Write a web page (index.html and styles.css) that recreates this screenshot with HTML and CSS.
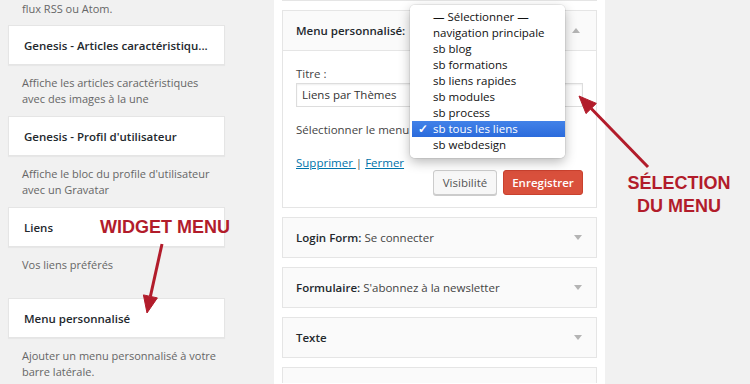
FILE: index.html
```html
<!DOCTYPE html>
<html lang="fr">
<head>
    <meta charset="UTF-8">
    <title>Widgets</title>
    <link rel="stylesheet" href="styles.css">
</head>
<body>
    <div class="available">
        <p class="desc desc-top">flux RSS ou Atom.</p>
        <div class="card">Genesis - Articles caractéristiqu...</div>
        <p class="desc">Affiche les articles caractéristiques<br>avec des images à la une</p>
        <div class="card">Genesis - Profil d'utilisateur</div>
        <p class="desc">Affiche le bloc du profile d'utilisateur<br>avec un Gravatar</p>
        <div class="card">Liens</div>
        <p class="desc">Vos liens préférés</p>
        <div class="card">Menu personnalisé</div>
        <p class="desc desc-last">Ajouter un menu personnalisé à votre<br>barre latérale.</p>
    </div>

    <div class="sidebar">
        <div class="widget-stub"></div>

        <div class="widget open">
            <div class="widget-top">
                <span class="wtitle">Menu personnalisé:</span>
                <span class="caret up"></span>
            </div>
            <div class="widget-inside">
                <p class="field-label">Titre :</p>
                <div class="text-input">Liens par Thèmes</div>
                <p class="field-label select-label">Sélectionner le menu</p>
                <div class="actions">
                    <div class="links"><a href="#">Supprimer </a>| <a href="#">Fermer</a></div>
                    <div class="buttons">
                        <button class="btn">Visibilité</button>
                        <button class="btn btn-save">Enregistrer</button>
                    </div>
                </div>
            </div>

            <ul class="dropdown">
                <li>— Sélectionner —</li>
                <li>navigation principale</li>
                <li>sb blog</li>
                <li>sb formations</li>
                <li>sb liens rapides</li>
                <li>sb modules</li>
                <li>sb process</li>
                <li class="selected"><span class="check">✓</span>sb tous les liens</li>
                <li>sb webdesign</li>
            </ul>
        </div>

        <div class="widget">
            <div class="widget-top">
                <span class="wtitle">Login Form: <span class="in-title">Se connecter</span></span>
                <span class="caret"></span>
            </div>
        </div>
        <div class="widget">
            <div class="widget-top">
                <span class="wtitle">Formulaire: <span class="in-title">S'abonnez à la newsletter</span></span>
                <span class="caret"></span>
            </div>
        </div>
        <div class="widget">
            <div class="widget-top">
                <span class="wtitle">Texte</span>
                <span class="caret"></span>
            </div>
        </div>
        <div class="widget widget-cut"></div>
    </div>

    <!-- annotations -->
    <div class="note note-widget">WIDGET MENU</div>
    <div class="note note-select">SÉLECTION<br>DU MENU</div>
    <svg class="arrows" width="750" height="384" viewBox="0 0 750 384">
        <g fill="#b21c2b" stroke="#b21c2b">
            <line x1="162" y1="244" x2="150.4" y2="296.4" stroke-width="3"/>
            <polygon points="147,313 157.4,297.9 143.4,294.9" stroke-width="1"/>
            <line x1="648" y1="167" x2="591.2" y2="108.5" stroke-width="3"/>
            <polygon points="579,96 596.4,103.4 586,113.6" stroke-width="1"/>
        </g>
    </svg>
</body>
</html>
```

FILE: styles.css
```css
body {
    margin: 0;
    background-color: #f1f1f1;
    font-family: 'Open Sans', sans-serif;
    font-size: 11.5px;
    color: #23282d;
    display: flex;
    align-items: flex-start;
    height: 384px;
    overflow: hidden;
    position: relative;
}
p {
    margin: 0;
}

/* left: available widgets */
.available {
    width: 217px;
    margin-left: 8px;
}
.card {
    box-sizing: border-box;
    height: 40px;
    padding: 0 15px;
    display: flex;
    align-items: center;
    background-color: #fff;
    border: 1px solid #e5e5e5;
    box-shadow: 0 1px 1px rgba(0, 0, 0, 0.04);
    font-weight: 600;
}
.desc {
    color: #666;
    font-size: 11px;
    line-height: 16px;
    min-height: 32px;
    padding: 10px 0 9px 14px;
}
.desc-top {
    min-height: 0;
    padding-top: 1px;
    padding-bottom: 8px;
}
.desc-last {
    padding-bottom: 0;
}

/* middle: sidebar */
.sidebar {
    width: 331px;
    height: 384px;
    margin-left: 49px;
    padding: 0 8px;
    box-sizing: border-box;
    background-color: #fff;
}
.widget-stub {
    height: 1px;
    background-color: #e5e5e5;
}
.widget {
    margin-top: 9px;
    background-color: #fafafa;
    border: 1px solid #e5e5e5;
    position: relative;
}
.widget-cut {
    height: 15px;
    border-bottom: none;
}
.widget-top {
    height: 39px;
    padding: 0 14px 0 13px;
    display: flex;
    align-items: center;
    justify-content: space-between;
}
.wtitle {
    font-weight: 600;
}
.in-title {
    font-weight: 400;
    color: #444;
}
.caret {
    width: 0;
    height: 0;
    border-left: 4px solid transparent;
    border-right: 4px solid transparent;
    border-top: 5px solid #b4b4b4;
}
.caret.up {
    border-top: none;
    border-bottom: 5px solid #b4b4b4;
    margin-right: 2px;
}
.widget-inside {
    border-top: 1px solid #e5e5e5;
    background-color: #fff;
    padding: 15px 13px 12px;
}
.field-label {
    line-height: 16px;
    color: #444;
}
.text-input {
    box-sizing: border-box;
    height: 24px;
    margin-top: 1px;
    padding: 0 5px;
    line-height: 22px;
    border: 1px solid #ddd;
    box-shadow: inset 0 1px 2px rgba(0, 0, 0, 0.07);
    color: #333;
}
.select-label {
    margin-top: 15px;
}
.actions {
    display: flex;
    justify-content: space-between;
    margin-top: 17px;
}
.links {
    line-height: 16px;
    color: #555;
}
.links a {
    color: #0073aa;
}
.buttons {
    display: flex;
    gap: 6px;
    margin-top: 15px;
}
.btn {
    height: 25px;
    width: 64px;
    padding: 0;
    font-family: 'Open Sans', sans-serif;
    font-size: 11.5px;
    color: #555;
    background-color: #f7f7f7;
    border: 1px solid #ccc;
    border-radius: 3px;
    box-shadow: 0 1px 0 #ccc;
}
.btn-save {
    width: 80px;
    color: #fff;
    font-weight: 600;
    background-color: #d9503c;
    border-color: #c9412e;
    box-shadow: none;
}

/* open select popup */
.dropdown {
    position: absolute;
    left: 127px;
    top: -6px;
    width: 155px;
    margin: 0;
    padding: 4px 0 5px;
    list-style: none;
    background-color: rgba(255, 255, 255, 0.98);
    border-radius: 5px;
    box-shadow: 0 4px 12px rgba(0, 0, 0, 0.28), 0 0 0 1px rgba(0, 0, 0, 0.06);
    color: #111;
}
.dropdown li {
    height: 16px;
    line-height: 16px;
    padding-left: 23px;
    white-space: nowrap;
    position: relative;
}
.dropdown li.selected {
    margin-left: 2px;
    padding-left: 21px;
    color: #fff;
    background: linear-gradient(#4282e8, #2b6bdc);
}
.check {
    position: absolute;
    left: 6px;
    top: 0;
    font-weight: 700;
}

/* annotations */
.note {
    position: absolute;
    color: #b21c2b;
    font-family: 'Liberation Sans', Arial, sans-serif;
    font-weight: 700;
    font-size: 18px;
    line-height: 23px;
}
.note-widget {
    left: 100px;
    top: 216px;
}
.note-select {
    left: 618px;
    top: 172px;
    width: 122px;
    text-align: center;
}
.arrows {
    position: absolute;
    left: 0;
    top: 0;
}
```
